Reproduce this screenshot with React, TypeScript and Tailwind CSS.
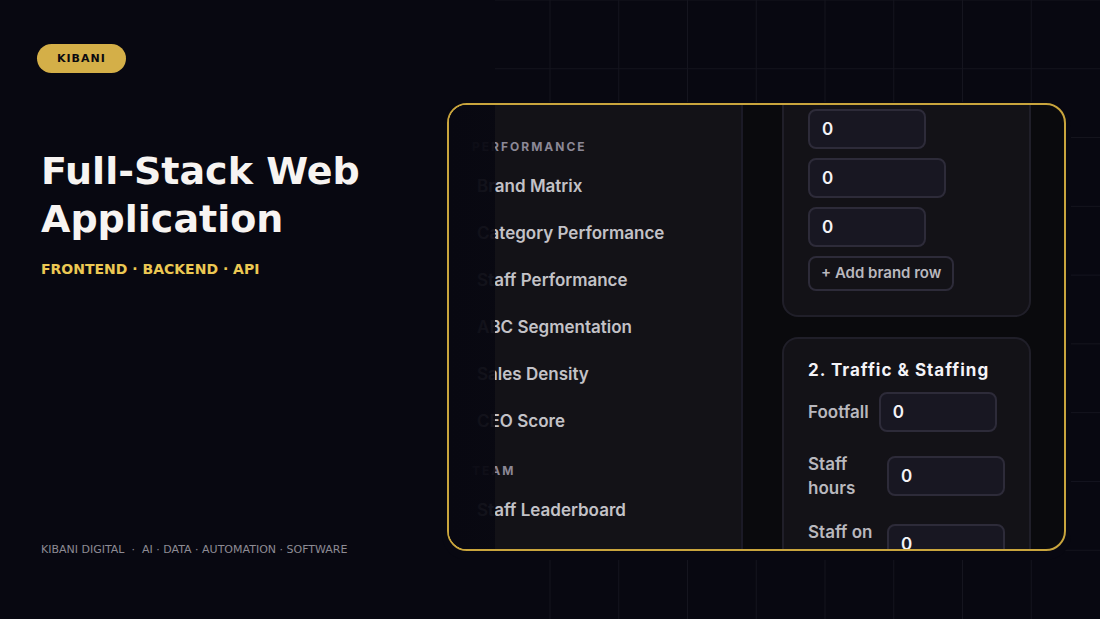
import clsx from 'clsx';

const performanceLinks = [
  'Brand Matrix',
  'Category Performance',
  'Staff Performance',
  'ABC Segmentation',
  'Sales Density',
  'CEO Score',
];

const teamLinks = ['Staff Leaderboard'];

const BackgroundGrid = () => (
  <svg className="absolute inset-y-0 right-0 w-full h-full" aria-hidden="true">
    <g stroke="#15151f" strokeWidth="1">
      {[8, 9, 10, 11, 12, 13, 14, 15].map((i) => (
        <line key={`v${i}`} x1={`${i * 6.25}%`} x2={`${i * 6.25}%`} y1="0" y2="100%" />
      ))}
      {[0, 1, 2, 3, 4, 5, 6, 7, 8].map((i) => (
        <line key={`h${i}`} x1="45%" x2="100%" y1={`${(i * 100) / 9}%`} y2={`${(i * 100) / 9}%`} />
      ))}
    </g>
  </svg>
);

interface NavGroupProps {
  title: string;
  links: string[];
}

const NavGroup = ({ title, links }: NavGroupProps) => (
  <div>
    <h2 className="h-8 leading-8 pl-[23px] text-[12px] font-bold tracking-[2px] text-[#8b8896]">
      {title}
    </h2>
    <ul>
      {links.map((link) => (
        <li key={link}>
          <a href="#" className="block h-[47px] leading-[46px] pl-7 text-[17px] font-semibold text-[#c3c2c7]">
            {link}
          </a>
        </li>
      ))}
    </ul>
  </div>
);

interface NumberInputProps {
  wide?: boolean;
  ariaLabel?: string;
}

const NumberInput = ({ wide, ariaLabel }: NumberInputProps) => (
  <input
    type="text"
    inputMode="numeric"
    defaultValue="0"
    aria-label={ariaLabel}
    className={clsx(
      'h-10 shrink-0 px-3 rounded-lg border-2 border-[#2d2b39] bg-[#181722] text-[17px] font-semibold text-[#f4f3f7]',
      wide ? 'w-[138px]' : 'w-[118px]'
    )}
  />
);

interface NumberFieldProps {
  label: string;
  twoLines?: boolean;
}

const NumberField = ({ label, twoLines }: NumberFieldProps) => (
  <label className="flex items-center gap-2.5">
    <span
      className={clsx(
        'text-[17px] leading-6 font-semibold text-[#b9b8be]',
        twoLines && 'w-[70px] h-12'
      )}
    >
      {label}
    </span>
    <NumberInput />
  </label>
);

const AppPreview = () => (
  <div className="relative flex min-h-0 overflow-hidden rounded-[20px] border-2 border-[#c9a53d] bg-[#0a0a0d] font-['Inter',sans-serif] shadow-[0_4px_0_5px_#080811]">
    <nav className="w-[294px] shrink-0 flex flex-col gap-2.5 pt-[26px] border-r-2 border-[#1b1a26] bg-[#131217]">
      <NavGroup title="PERFORMANCE" links={performanceLinks} />
      <NavGroup title="TEAM" links={teamLinks} />
    </nav>

    <form className="flex-1 min-w-0 flex flex-col gap-5 pl-[39px] pr-[33px]">
      <section className="flex flex-col items-start gap-[9px] pt-1 pb-6 px-6 rounded-b-2xl border-2 border-t-0 border-[#201f29] bg-[#131217]">
        <NumberInput ariaLabel="Units" />
        <NumberInput ariaLabel="Revenue" wide />
        <NumberInput ariaLabel="Margin" />
        <button
          type="button"
          className="h-[35px] px-[11px] rounded-lg border-2 border-[#2d2b39] text-[15px] font-semibold text-[#b9b8be] whitespace-nowrap"
        >
          + Add brand row
        </button>
      </section>

      <section className="pt-[19px] pb-6 px-6 rounded-t-2xl border-2 border-b-0 border-[#201f29] bg-[#131217]">
        <h2 className="mb-2.5 text-[17px] leading-6 font-bold tracking-[1px] text-[#f4f3f7] whitespace-nowrap">
          2. Traffic &amp; Staffing
        </h2>
        <div className="flex flex-col gap-5">
          <NumberField label="Footfall" />
          <NumberField label="Staff hours" twoLines />
          <NumberField label="Staff on" twoLines />
        </div>
      </section>
    </form>

    {/* Fades the left edge of the preview into the page */}
    <div className="pointer-events-none absolute inset-y-0 left-0 w-[46px] bg-linear-to-r from-[#080811] to-[#080811]/93"></div>
  </div>
);

const App = () => {
  return (
    <main className="relative h-screen grid grid-cols-[minmax(0,13fr)_minmax(0,18fr)] grid-rows-[minmax(0,1fr)] pr-[34px] overflow-hidden bg-[#080811]">
      <BackgroundGrid />

      <div className="relative flex flex-col items-start pt-11 pb-[61px] pl-[41px] font-['DejaVu_Sans',sans-serif]">
        <span className="-ml-1 h-[29px] pt-px px-5 flex items-center rounded-full bg-[#d4af48] text-[11px] font-bold tracking-[1px] text-[#0b0a10]">
          KIBANI
        </span>
        <h1 className="mt-[74px] text-[38px] leading-[48px] font-bold text-[#f7f4f2]">
          Full-Stack Web Application
        </h1>
        <p className="mt-4 text-[14px] leading-5 font-bold text-[#ecc853]">
          FRONTEND · BACKEND · API
        </p>
        <p className="mt-auto text-[11px] leading-4 text-[#8d8b94] whitespace-pre">
          {'KIBANI DIGITAL  ·  AI · DATA · AUTOMATION · SOFTWARE'}
        </p>
      </div>

      <div className="relative grid grid-rows-[minmax(0,1fr)] pt-[103px] pb-[68px]">
        <AppPreview />
      </div>
    </main>
  );
};

export default App;
